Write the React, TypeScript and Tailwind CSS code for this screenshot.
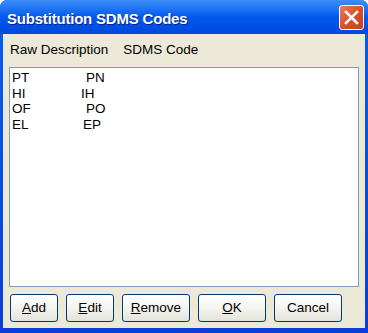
const ROWS = [
  { raw: "PT", code: "PN", gap: "ml-[54px]" },
  { raw: "HI", code: "IH", gap: "ml-[49px]" },
  { raw: "OF", code: "PO", gap: "ml-[54px]" },
  { raw: "EL", code: "EP", gap: "ml-[51px]" },
];

function XpButton({ children, width }: { children: React.ReactNode; width: string }) {
  return (
    <button
      className={`${width} h-[28px] rounded-[3px] border border-[#003c74] bg-gradient-to-b from-[#ffffff] via-[#f4f4f0] to-[#e3e2da] text-[13.5px] text-black`}
    >
      {children}
    </button>
  );
}

export default function App() {
  return (
    <div
      className="flex h-[333px] w-[368px] flex-col rounded-t-[7px] bg-gradient-to-b from-[#0a5ef0] to-[#0b3ed6]"
      style={{ fontFamily: "'Liberation Sans', Arial, sans-serif" }}
    >
      {/* Title bar */}
      <div className="flex h-[34px] shrink-0 items-center justify-between rounded-t-[7px] bg-gradient-to-b from-[#3d8ef8] via-[#0058ee] to-[#0048dc] pl-[7px] pr-[4px]">
        <span
          className="mt-[5px] text-[15px] font-bold tracking-[-0.2px] text-white"
          style={{ textShadow: "1px 1px #0a1e80" }}
        >
          Substitution SDMS Codes
        </span>
        <div className="flex h-[25px] w-[25px] items-center justify-center rounded-[3px] border border-white bg-gradient-to-br from-[#e97a5b] via-[#d9512c] to-[#c4401f]">
          <svg width="15" height="15" viewBox="0 0 15 15">
            <path d="M2 2 L13 13 M13 2 L2 13" stroke="white" strokeWidth="2.6" strokeLinecap="square" />
          </svg>
        </div>
      </div>

      {/* Body */}
      <div className="mx-[3px] mb-[5px] flex flex-1 flex-col bg-[#ece9d8] px-[6px]">
        <div className="flex pt-[8px] text-[13.5px] leading-[16px] text-black">
          <span className="ml-[1px]">Raw Description</span>
          <span className="ml-[15px]">SDMS Code</span>
        </div>
        <div className="mt-[9px] h-[220px] border border-[#7f9db9] bg-white px-[2px] pt-[2px] text-[13.5px] leading-[15.5px] text-black">
          {ROWS.map((r) => (
            <div key={r.raw} className="flex">
              <span className="w-[20px]">{r.raw}</span>
              <span className={r.gap}>{r.code}</span>
            </div>
          ))}
        </div>
        <div className="mt-[7px] flex gap-[8px] pl-[1px]">
          <XpButton width="w-[48px]">
            <span className="underline">A</span>dd
          </XpButton>
          <XpButton width="w-[48px]">
            <span className="underline">E</span>dit
          </XpButton>
          <XpButton width="w-[68px]">
            <span className="underline">R</span>emove
          </XpButton>
          <XpButton width="w-[68px]">
            <span className="underline">O</span>K
          </XpButton>
          <XpButton width="w-[68px]">Cancel</XpButton>
        </div>
      </div>
    </div>
  );
}
